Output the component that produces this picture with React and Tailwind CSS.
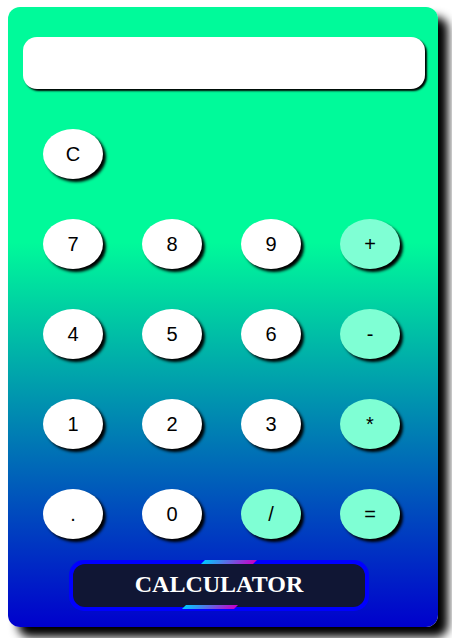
const rows = [
  ["7", "8", "9", "+"],
  ["4", "5", "6", "-"],
  ["1", "2", "3", "*"],
  [".", "0", "/", "="],
];

const ops = ["+", "-", "*", "/", "="];

function Key({ label }) {
  const isOp = ops.includes(label);
  return (
    <button
      className={`h-[50px] w-[60px] rounded-[50%] text-[20px] text-black shadow-[3px_3px_3px_#000] ${
        isOp ? "bg-[#7fffd4]" : "bg-white"
      }`}
      style={{ fontFamily: '"Liberation Sans", Arial, sans-serif' }}
    >
      {label}
    </button>
  );
}

export default function App() {
  return (
    <div className="h-[638px] w-[452px] bg-white pl-[8px] pt-[7px]">
      <div className="flex h-[620px] w-[430px] flex-col rounded-[12px] bg-[linear-gradient(#00fa9a_38%,#0000cd_100%)] pt-[30px] shadow-[10px_10px_10px_#000]">
        <div className="ml-[15px] h-[52px] w-[402px] rounded-[14px] bg-white shadow-[2px_2px_2px_#000]" />

        <div className="ml-[35px] mt-[40px] grid grid-cols-[repeat(4,60px)] gap-x-[39px] gap-y-[40px]">
          <Key label="C" />
          <div />
          <div />
          <div />
          {rows.flat().map((k) => (
            <Key key={k} label={k} />
          ))}
        </div>

        <div className="relative ml-[61px] mt-[21px] h-[51px] w-[300px] rounded-[15px] bg-[#0000ff] p-[4px]">
          <div className="flex h-full w-full items-center justify-center rounded-[12px] bg-[#101634] pb-[4px]">
            <span
              className="text-[24px] font-bold text-white"
              style={{ fontFamily: '"Liberation Serif", "Times New Roman", serif' }}
            >
              CALCULATOR
            </span>
          </div>
          <span className="absolute left-[134px] top-0 h-[4px] w-[52px] -skew-x-[45deg] bg-[linear-gradient(90deg,#00c8ff,#c800c8)]" />
          <span className="absolute left-[115px] bottom-[2px] h-[4px] w-[52px] -skew-x-[45deg] bg-[linear-gradient(90deg,#00c8ff,#c800c8)]" />
        </div>
      </div>
    </div>
  );
}
